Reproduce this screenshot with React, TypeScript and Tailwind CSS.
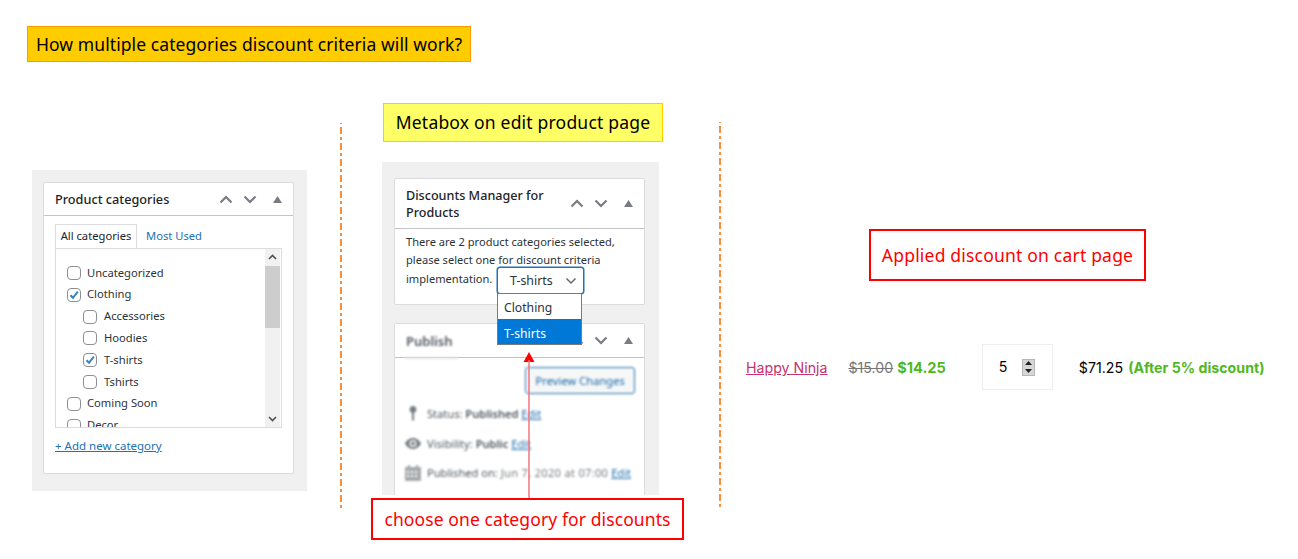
import React from "react";

const CATEGORIES = [
  { name: "Uncategorized", checked: false, child: false },
  { name: "Clothing", checked: true, child: false },
  { name: "Accessories", checked: false, child: true },
  { name: "Hoodies", checked: false, child: true },
  { name: "T-shirts", checked: true, child: true },
  { name: "Tshirts", checked: false, child: true },
  { name: "Coming Soon", checked: false, child: false },
  { name: "Decor", checked: false, child: false },
];

const Handles = () => (
  <div className="flex items-center shrink-0">
    <svg width="14" height="9" viewBox="0 0 14 9" fill="none" className="mr-[10px]">
      <path d="M1.500 7.500 7 2l5.500 5.500" stroke="#787c82" strokeWidth="2.2" />
    </svg>
    <svg width="14" height="9" viewBox="0 0 14 9" fill="none" className="mr-[16px]">
      <path d="M1.500 1.500 7 7l5.500-5.500" stroke="#787c82" strokeWidth="2.2" />
    </svg>
    <svg width="9" height="7" viewBox="0 0 9 7">
      <path d="M4.500 0 9 7H0z" fill="#787c82" />
    </svg>
  </div>
);

const Check = ({ checked }: { checked: boolean }) => (
  <span className="w-[14px] h-[14px] rounded-[4px] border border-[#8c8f94] bg-white shrink-0 flex items-center justify-center">
    {checked && (
      <svg width="12" height="12" viewBox="0 0 12 12" fill="none">
        <path d="M2.500 6.200 5 8.800 9.800 2.600" stroke="#3582c4" strokeWidth="2" />
      </svg>
    )}
  </span>
);

const Divider = ({ className }: { className: string }) => (
  <div
    className={`w-[2px] h-[385px] shrink-0 bg-[repeating-linear-gradient(to_bottom,#f98f3c_0,#f98f3c_1px,transparent_1px,transparent_4px,#f98f3c_4px,#f98f3c_11px,transparent_11px,transparent_14px,#f98f3c_14px,#f98f3c_16px)] ${className}`}
  />
);

export default function App() {
  return (
    <div className="w-[1298px] h-[559px] bg-white overflow-hidden font-['Noto_Sans',sans-serif]">
      <div className="pt-[26px] pl-[27px]">
        <div className="w-[444px] h-[36px] leading-[35px] pl-[8px] bg-[#ffcc00] border border-[#ff9900] text-[17.5px] tracking-[0.08px] text-black whitespace-nowrap">
          How multiple categories discount criteria will work?
        </div>
      </div>

      <div className="flex items-start mt-[41px]">
        {/* product categories */}
        <div className="ml-[32px] mt-[67px] w-[275px] h-[321px] bg-[#f0f0f0] pt-[12px] px-[11px] shrink-0">
          <div className="w-[251px] h-[292px] bg-white border border-[#dcdcde] rounded-[2px] text-[#2c3338]">
            <div className="h-[33px] pl-[11px] pr-[11px] flex items-center justify-between border-b border-[#c3c4c7]">
              <span className="text-[12.7px] font-medium text-[#1d2327] relative top-[1px]">Product categories</span>
              <Handles />
            </div>
            <div className="pl-[11px] pt-[8px] w-[238px]">
              <div className="flex items-end h-[24px] text-[11.2px]">
                <div className="h-[25px] w-[82px] border border-[#dcdcde] border-b-white bg-white leading-[21px] text-center relative top-[1px] text-[#1d2327]">
                  All categories
                </div>
                <span className="ml-[9px] text-[#2271b1] leading-[25px]">Most Used</span>
              </div>
              <div className="relative w-[227px] h-[180px] border border-[#dcdcde] overflow-hidden">
                <div className="pt-[17px] pl-[11px] flex flex-col gap-[7.8px]">
                  {CATEGORIES.map((c) => (
                    <div key={c.name} className={`flex items-center h-[14px] text-[11.2px] ${c.child ? "pl-[16px] gap-[7px]" : "gap-[6px]"}`}>
                      <Check checked={c.checked} />
                      <span>{c.name}</span>
                    </div>
                  ))}
                </div>
                <div className="absolute right-[1px] top-0 w-[15px] h-full bg-[#f1f1f1] flex flex-col items-center">
                  <svg width="9" height="17" viewBox="0 0 9 17" fill="none">
                    <path d="M1 10 4.500 6.500 8 10" stroke="#505050" strokeWidth="1.6" />
                  </svg>
                  <div className="w-[15px] h-[62px] bg-[#cdcdcd]" />
                  <svg width="9" height="8" viewBox="0 0 9 8" fill="none" className="absolute bottom-[4px]">
                    <path d="M1 2 4.500 5.500 8 2" stroke="#505050" strokeWidth="1.6" />
                  </svg>
                </div>
              </div>
              <div className="mt-[9px] text-[11.5px] text-[#2271b1] underline">+ Add new category</div>
            </div>
          </div>
        </div>

        <Divider className="ml-[33px] mt-[20px]" />

        {/* metabox */}
        <div className="ml-[29px] w-[313px] shrink-0 relative">
          <div className="ml-[12px] w-[280px] h-[39px] bg-[#ffff66] border border-[#ffcc00] text-[17.5px] tracking-[0.2px] leading-[36px] text-center text-black whitespace-nowrap">
            Metabox on edit product page
          </div>
          <div className="ml-[11px] mt-[20px] w-[277px] h-[333px] bg-[#f0f0f0] pt-[16px] px-[12px] overflow-hidden">
            <div className="w-[251px] h-[127px] bg-white border border-[#dcdcde] rounded-[2px] text-[#2c3338]">
              <div className="h-[50px] pl-[11px] pr-[11px] flex items-center justify-between border-b border-[#c3c4c7]">
                <span className="text-[12.6px] font-medium leading-[17px] text-[#1d2327] w-[150px]">Discounts Manager for Products</span>
                <Handles />
              </div>
              <div className="relative pl-[11px] pt-[4px] text-[11.1px] leading-[18px]">
                <div>There are 2 product categories selected,</div>
                <div>please select one for discount criteria</div>
                <div className="mt-[1px]">implementation.</div>
                <div className="absolute left-[102px] top-[38px] w-[87px] h-[27px] bg-white border border-[#2271b1] shadow-[0_0_0_0.5px_#2271b1] rounded-[3px] flex items-center justify-between pl-[12px] pr-[6px] pt-[1px] text-[12.4px] text-[#2c3338]">
                  T-shirts
                  <svg width="12" height="8" viewBox="0 0 12 8" fill="none">
                    <path d="M1.500 1.500 6 6l4.500-4.500" stroke="#646970" strokeWidth="1.500" />
                  </svg>
                </div>
                <div className="absolute z-10 left-[102px] top-[64px] w-[85px] h-[52px] bg-white border border-[#7a7a7a] text-[12.2px]">
                  <div className="h-[25px] leading-[28px] pl-[6px] text-[#2c3338]">Clothing</div>
                  <div className="h-[25px] leading-[29px] pl-[6px] bg-[#0078d7] text-white">T-shirts</div>
                </div>
              </div>
            </div>

            <div className="mt-[18px] w-[251px] h-[200px] bg-white border border-[#dcdcde] rounded-[2px] text-[#50575e] relative">
              <div className="h-[34px] pl-[11px] pr-[11px] flex items-center justify-between border-b border-[#c3c4c7]">
                <span className="text-[13px] font-semibold text-[#50575e] blur-[1.2px] relative top-[1px]">Publish</span>
                <Handles />
              </div>
              <div className="absolute left-[10px] top-[33px] w-[53px] h-[2px] bg-[#e4e4e4] blur-[1px]" />
              <div className="blur-[1.1px]">
                <div className="flex justify-end pr-[9px] pt-[9px]">
                  <div className="w-[110px] h-[27px] border border-[#2271b1] rounded-[3px] bg-[#f6f7f7] text-[#2271b1] text-[11.2px] leading-[25px] text-center">
                    Preview Changes
                  </div>
                </div>
                <div className="flex flex-col gap-[10.5px] mt-[10px] pl-[10px] text-[11.1px] leading-[19px]">
                  <div className="flex items-center gap-[6px]">
                    <span className="w-[16px] flex justify-center">
                      <svg width="8" height="15" viewBox="0 0 8 15"><path d="M4 0a3.500 3.500 0 0 1 1 6.800V14l-1 1-1-1V6.800A3.500 3.500 0 0 1 4 0z" fill="#787c82" /></svg>
                    </span>
                    <span>Status: <b className="font-semibold">Published</b> <u className="text-[#2271b1]">Edit</u></span>
                  </div>
                  <div className="flex items-center gap-[6px]">
                    <svg width="16" height="11" viewBox="0 0 16 11">
                      <path fillRule="evenodd" d="M8 0c3.500 0 6.500 2.400 8 5.500-1.500 3.100-4.500 5.500-8 5.500S1.500 8.600 0 5.500C1.500 2.400 4.500 0 8 0zm0 2a3.500 3.500 0 1 0 0 7 3.500 3.500 0 0 0 0-7z" fill="#787c82" />
                      <circle cx="8" cy="5.500" r="2" fill="#787c82" />
                    </svg>
                    <span>Visibility: <b className="font-semibold">Public</b> <u className="text-[#2271b1]">Edit</u></span>
                  </div>
                  <div className="flex items-center gap-[6px]">
                    <svg width="16" height="16" viewBox="0 0 16 16">
                      <path fillRule="evenodd" d="M0 2h3V0h2v2h6V0h2v2h3v14H0zM2 6v2h2V6zm4 0v2h2V6zm4 0v2h2V6zM2 10v2h2v-2zm4 0v2h2v-2zm4 0v2h2v-2z" fill="#a7aaad" />
                    </svg>
                    <span>Published on: <span className="text-[#787c82] tracking-[0.3px]">Jun 7, 2020 at 07:00</span> <u className="text-[#2271b1]">Edit</u></span>
                  </div>
                </div>
              </div>
            </div>
          </div>

          {/* arrow from the note up to the dropdown */}
          <svg width="12" height="146" viewBox="0 0 12 146" className="absolute left-[152px] top-[249px] z-20">
            <path d="M6 0 11.500 10H.5z" fill="#ff0000" />
            <path d="M6 8V146" stroke="#f4737b" strokeWidth="1.500" />
          </svg>

          <div className="relative mt-[3px] w-[313px] h-[42px] border-2 border-[#ff0000] bg-white text-[#ff0000] text-[17.5px] tracking-[0.1px] leading-[38px] text-center whitespace-nowrap">
            choose one category for discounts
          </div>
        </div>

        <Divider className="ml-[35px] mt-[19px]" />

        {/* cart */}
        <div className="flex-1 min-w-0 mt-[126px]">
          <div className="ml-[148px] w-[277px] h-[52px] border-2 border-[#ff0000] text-[#ff0000] text-[17.5px] tracking-[0.2px] leading-[48px] text-center whitespace-nowrap">
            Applied discount on cart page
          </div>
          <div className="mt-[63px] ml-[25px] h-[46px] flex items-center font-['Inter',sans-serif] text-[14.2px] whitespace-nowrap">
            <a className="text-[#c7316f] underline relative top-[1px]">Happy Ninja</a>
            <span className="ml-[21px] text-[#777777] line-through relative top-[1px]">$15.00</span>
            <span className="ml-[4px] font-bold text-[14.6px] text-[#4fb81f] relative top-[2px]">$14.25</span>
            <div className="ml-[36px] w-[71px] h-[46px] border border-[#eeeeee] flex items-center pl-[16px] text-black">
              5
              <span className="ml-[15px] w-[13px] h-[17px] bg-[#d6d6d6] border border-[#b5b5b5] flex flex-col items-center justify-around">
                <svg width="7" height="4" viewBox="0 0 7 4"><path d="M3.500 0 7 4H0z" fill="#222222" /></svg>
                <svg width="7" height="4" viewBox="0 0 7 4"><path d="M3.500 4 7 0H0z" fill="#222222" /></svg>
              </span>
            </div>
            <span className="ml-[26px] text-black relative top-[1px]">$71.25</span>
            <span className="ml-[5px] font-bold text-[#4fb81f] relative top-[1px]">(After 5% discount)</span>
          </div>
        </div>
      </div>
    </div>
  );
}
